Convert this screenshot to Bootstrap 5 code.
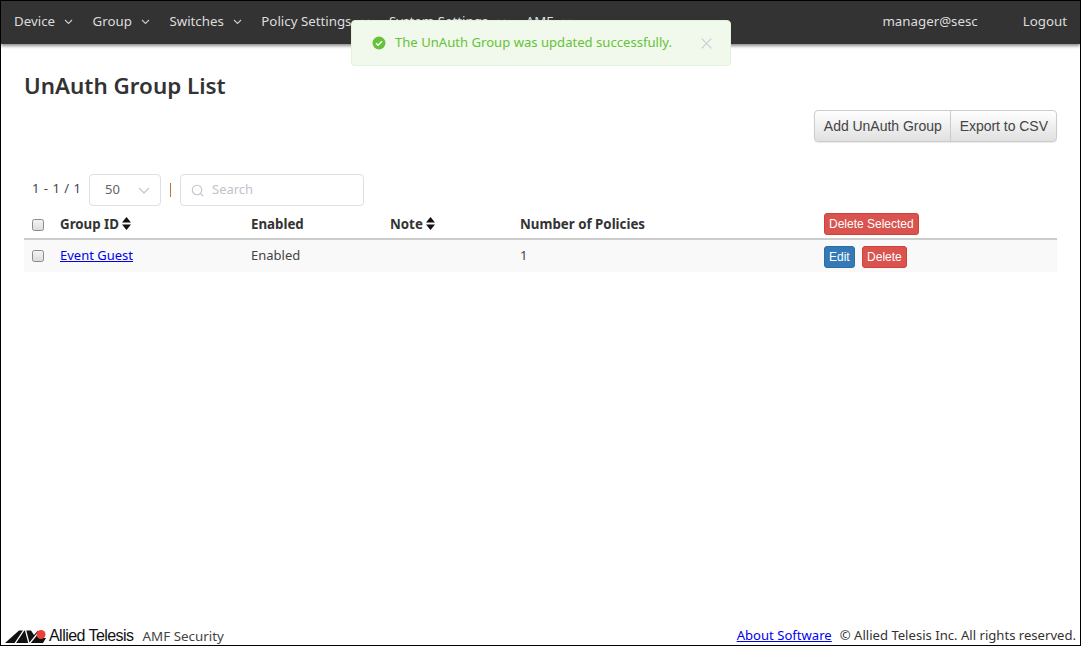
<!DOCTYPE html>
<html lang="en">
<head>
<meta charset="utf-8">
<title>UnAuth Group List</title>
<link rel="stylesheet" href="https://cdn.jsdelivr.net/npm/bootstrap@5.3.0/dist/css/bootstrap.min.css">
<style>
html,body{height:100%;overflow:hidden}
body{font-family:"Noto Sans","Open Sans",sans-serif;font-size:13.3px;color:#333;background:#fff;border:1px solid #000;}
.app-shell{height:100%;position:relative}
.top-bar{height:43px;background:#333;box-shadow:0 2px 3px rgba(0,0,0,.45);padding:0 13px 2px;color:#ddd}
.top-item{display:flex;align-items:center;gap:9px;color:#ddd;text-decoration:none;font-size:13.3px;margin-right:19.5px;white-space:nowrap}
.top-user{margin-right:45px}
.top-item.last{margin-right:0}
.msg-box{position:absolute;left:350px;top:19px;width:380px;height:46px;background:#f0f9eb;border:1px solid #e1f3d8;border-radius:4px;color:#67c23a;padding:0 18px 0 20px;z-index:5;font-size:13.1px}
.msg-text{margin-left:9px}
.msg-close{margin-left:auto}
.page-title{font-size:22.4px;font-weight:600;color:#333;margin:26px 0 0;line-height:32px}
.content-area{padding:0 23px}
.act-wrap{margin-top:8px}
.act-btn{font-family:"Liberation Sans",sans-serif;font-size:14px;letter-spacing:-.03px;color:#444;height:32px;padding:0 8px 0 9px;border:1px solid #ccc;background:linear-gradient(#fff,#e0e0e0);box-shadow:0 1px 1px rgba(0,0,0,.08);border-radius:4px!important;line-height:30px}
.btn-group .act-btn:first-child{border-top-right-radius:0!important;border-bottom-right-radius:0!important}
.btn-group .act-btn:last-child{border-top-left-radius:0!important;border-bottom-left-radius:0!important;margin-left:-1px}
.tools{margin-top:32px;height:32px;padding-left:8px}
.range-txt{width:57px;font-size:13px;color:#4a3f55;word-spacing:1px;padding-bottom:2px}
.size-sel{width:72px;height:32px;border:1px solid #dcdfe6;border-radius:4px;padding:0 10px 0 15px;color:#606266;font-size:13px}
.bar-sep{width:1px;height:14px;background:#b5792c;margin:0 9px}
.search-box{width:184px;height:32px;border:1px solid #dcdfe6;border-radius:4px;padding:0 10px;color:#c0c4cc;font-size:13px;gap:8px}
.grid-tbl{width:1033px;table-layout:fixed;margin:3px 0 0;border-collapse:collapse}
.grid-tbl th{font-weight:700;font-size:13.3px;color:#333;padding:2px 0 0;height:30px;border-bottom:2px solid #ccc;vertical-align:middle;background:#fff}
.grid-tbl td{font-size:13px;color:#444;height:33px;padding:1px 0 1px;background:#f9f9f9;border:0;vertical-align:middle}
.fake-check{display:block;width:12px;height:12px;margin-left:8px;border:1px solid #8a8a8a;border-radius:2.5px;background:linear-gradient(#f4f4f4,#dcdcdc)}
.sort-mark{display:inline-block;vertical-align:-1px;margin-left:3px}
.row-link{color:#00e;text-decoration:underline}
.num-cell{color:#4a3f55!important}
.mini-btn{font-family:"Liberation Sans",sans-serif;font-weight:400;font-size:12px;color:#fff;border-radius:3px;padding:0 4px;height:22px;line-height:20px;border:1px solid transparent;display:inline-block;white-space:nowrap}
.mini-red{background:#d9534f;border-color:#d43f3a}
.mini-blue{background:#337ab7;border-color:#2e6da4}
.head-del{transform:translateY(-1px)}
.row-acts{margin-top:2px;gap:7.4px}
.foot-line{position:absolute;left:0;right:0;bottom:-1px;height:20px;padding:0 4px 0 4px;font-size:13.1px;color:#333}
.logo-txt{font-family:"Liberation Sans",sans-serif;font-size:16px;letter-spacing:-.55px;color:#111;margin-left:3px;font-weight:400}
.prod-txt{margin-left:9px;color:#444;font-size:13.4px}
.foot-link{color:#00e;text-decoration:underline;margin-right:8px}
</style>
</head>
<body>
<div class="app-shell">
  <nav class="top-bar d-flex align-items-center">
    <a class="top-item" href="#">Device <svg width="9" height="6" viewBox="0 0 9 6"><path d="M1 1l3.5 3.5L8 1" fill="none" stroke="#ccc" stroke-width="1.1"/></svg></a>
    <a class="top-item" href="#">Group <svg width="9" height="6" viewBox="0 0 9 6"><path d="M1 1l3.5 3.5L8 1" fill="none" stroke="#ccc" stroke-width="1.1"/></svg></a>
    <a class="top-item" href="#">Switches <svg width="9" height="6" viewBox="0 0 9 6"><path d="M1 1l3.5 3.5L8 1" fill="none" stroke="#ccc" stroke-width="1.1"/></svg></a>
    <a class="top-item" href="#">Policy Settings <svg width="9" height="6" viewBox="0 0 9 6"><path d="M1 1l3.5 3.5L8 1" fill="none" stroke="#ccc" stroke-width="1.1"/></svg></a>
    <a class="top-item" href="#">System Settings <svg width="9" height="6" viewBox="0 0 9 6"><path d="M1 1l3.5 3.5L8 1" fill="none" stroke="#ccc" stroke-width="1.1"/></svg></a>
    <a class="top-item" href="#">AMF <svg width="9" height="6" viewBox="0 0 9 6"><path d="M1 1l3.5 3.5L8 1" fill="none" stroke="#ccc" stroke-width="1.1"/></svg></a>
    <a class="top-item top-user ms-auto" href="#">manager@sesc</a>
    <a class="top-item last" href="#">Logout</a>
  </nav>

  <div class="msg-box d-flex align-items-center">
    <svg width="14" height="14" viewBox="0 0 14 14"><circle cx="7" cy="7" r="6.5" fill="#67c23a"/><path d="M4 7.2l2.1 2 3.9-4" fill="none" stroke="#fff" stroke-width="1.5"/></svg>
    <span class="msg-text">The UnAuth Group was updated successfully.</span>
    <svg class="msg-close" width="11" height="11" viewBox="0 0 11 11"><path d="M.7.7l9.6 9.6M10.3.7L.7 10.3" stroke="#c8cdd3" stroke-width="1.2"/></svg>
  </div>

  <main class="content-area">
    <h1 class="page-title">UnAuth Group List</h1>
    <div class="act-wrap d-flex justify-content-end">
      <div class="btn-group">
        <button class="btn act-btn" type="button">Add UnAuth Group</button>
        <button class="btn act-btn" type="button">Export to CSV</button>
      </div>
    </div>
    <div class="tools d-flex align-items-center">
      <span class="range-txt">1 - 1 / 1</span>
      <div class="size-sel d-flex align-items-center justify-content-between"><span>50</span><svg width="12" height="7" viewBox="0 0 12 7"><path d="M1 1l5 5 5-5" fill="none" stroke="#c0c4cc" stroke-width="1.1"/></svg></div>
      <span class="bar-sep"></span>
      <div class="search-box d-flex align-items-center"><svg width="13" height="13" viewBox="0 0 13 13"><circle cx="6" cy="6" r="4.7" fill="none" stroke="#c0c4cc" stroke-width="1.1"/><path d="M9.5 9.5l2.5 2.5" stroke="#c0c4cc" stroke-width="1.1"/></svg><span>Search</span></div>
    </div>
    <table class="grid-tbl">
      <colgroup><col style="width:36px"><col style="width:191px"><col style="width:139px"><col style="width:130px"><col style="width:304px"><col></colgroup>
      <thead>
        <tr>
          <th><span class="fake-check"></span></th>
          <th>Group ID<svg class="sort-mark" width="9" height="13" viewBox="0 0 9 13"><path d="M4.5 0L9 5.5H0zM4.5 13L0 7.5h9z" fill="#111"/></svg></th>
          <th>Enabled</th>
          <th>Note<svg class="sort-mark" width="9" height="13" viewBox="0 0 9 13"><path d="M4.5 0L9 5.5H0zM4.5 13L0 7.5h9z" fill="#111"/></svg></th>
          <th>Number of Policies</th>
          <th><span class="mini-btn mini-red head-del">Delete Selected</span></th>
        </tr>
      </thead>
      <tbody>
        <tr>
          <td><span class="fake-check"></span></td>
          <td><a class="row-link" href="#">Event Guest</a></td>
          <td>Enabled</td>
          <td></td>
          <td class="num-cell">1</td>
          <td><span class="d-flex row-acts"><span class="mini-btn mini-blue">Edit</span><span class="mini-btn mini-red">Delete</span></span></td>
        </tr>
      </tbody>
    </table>
  </main>

  <footer class="foot-line d-flex align-items-center">
    <svg width="41" height="13" viewBox="0 0 41 13"><path d="M0 13L14 .5h12L29 5 33 .5 36 8h5l-3 5z" fill="#111"/><path d="M10 13.500L19 0M20.500 0L24 13.500M24.500 13.500L33 3" fill="none" stroke="#fff" stroke-width="1.300"/><circle cx="36" cy="4.500" r="4.500" fill="#e8403a"/></svg>
    <span class="logo-txt">Allied Telesis</span>
    <span class="prod-txt">AMF Security</span>
    <span class="ms-auto"><a class="foot-link" href="#">About Software</a>© Allied Telesis Inc. All rights reserved.</span>
  </footer>
</div>
<script src="https://cdn.jsdelivr.net/npm/bootstrap@5.3.0/dist/js/bootstrap.bundle.min.js"></script>
</body>
</html>
